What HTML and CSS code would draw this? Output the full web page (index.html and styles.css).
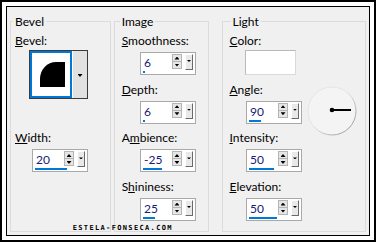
FILE: index.html
```html
<!DOCTYPE html>
<html lang="en">

<head>
    <meta charset="UTF-8">
    <meta name="viewport" content="width=device-width, initial-scale=1.0">
    <title>Bevel</title>
    <link rel="stylesheet" href="styles.css">
</head>

<body>
    <div class="screen">
        <div class="dialog">
            <fieldset class="group group-bevel">
                <legend>Bevel</legend>
                <div class="field field-pick">
                    <div class="label"><u>B</u>evel:</div>
                    <div class="pick">
                        <div class="pick-face">
                            <svg width="25" height="25" viewBox="0 0 25 25">
                                <path d="M0 25V17A16 17 0 0 1 16 0H25V25Z" fill="#000" />
                            </svg>
                        </div>
                        <div class="pick-drop"><span class="tri-down"></span></div>
                    </div>
                </div>
                <div class="field field-width">
                    <div class="label"><u>W</u>idth:</div>
                    <div class="spin">
                        <div class="spin-row">
                            <span class="spin-val">20</span>
                            <span class="arrows"><span><i class="tri-up"></i></span><span><i class="tri-down"></i></span></span>
                            <span class="drop"><i class="tri-down"></i></span>
                        </div>
                        <div class="spin-bar" style="width: 32px"></div>
                    </div>
                </div>
            </fieldset>

            <fieldset class="group group-image">
                <legend>Image</legend>
                <div class="field">
                    <div class="label"><u>S</u>moothness:</div>
                    <div class="spin">
                        <div class="spin-row">
                            <span class="spin-val">6</span>
                            <span class="arrows"><span><i class="tri-up"></i></span><span><i class="tri-down"></i></span></span>
                            <span class="drop"><i class="tri-down"></i></span>
                        </div>
                        <div class="spin-bar" style="width: 2px"></div>
                    </div>
                </div>
                <div class="field">
                    <div class="label"><u>D</u>epth:</div>
                    <div class="spin">
                        <div class="spin-row">
                            <span class="spin-val">6</span>
                            <span class="arrows"><span><i class="tri-up"></i></span><span><i class="tri-down"></i></span></span>
                            <span class="drop"><i class="tri-down"></i></span>
                        </div>
                        <div class="spin-bar" style="width: 2px"></div>
                    </div>
                </div>
                <div class="field">
                    <div class="label">A<u>m</u>bience:</div>
                    <div class="spin">
                        <div class="spin-row">
                            <span class="spin-val">-25</span>
                            <span class="arrows"><span><i class="tri-up"></i></span><span><i class="tri-down"></i></span></span>
                            <span class="drop"><i class="tri-down"></i></span>
                        </div>
                        <div class="spin-bar" style="width: 19px"></div>
                    </div>
                </div>
                <div class="field">
                    <div class="label">S<u>h</u>ininess:</div>
                    <div class="spin">
                        <div class="spin-row">
                            <span class="spin-val">25</span>
                            <span class="arrows"><span><i class="tri-up"></i></span><span><i class="tri-down"></i></span></span>
                            <span class="drop"><i class="tri-down"></i></span>
                        </div>
                        <div class="spin-bar" style="width: 12px"></div>
                    </div>
                </div>
            </fieldset>

            <fieldset class="group group-light">
                <legend>Light</legend>
                <div class="light-body">
                    <div class="field">
                        <div class="label label-color"><u>C</u>olor:</div>
                        <div class="swatch"></div>
                    </div>
                    <div class="field">
                        <div class="label"><u>A</u>ngle:</div>
                        <div class="spin">
                            <div class="spin-row">
                                <span class="spin-val">90</span>
                                <span class="arrows"><span><i class="tri-up"></i></span><span><i class="tri-down"></i></span></span>
                                <span class="drop"><i class="tri-down"></i></span>
                            </div>
                            <div class="spin-bar" style="width: 12px"></div>
                        </div>
                    </div>
                    <div class="dial">
                        <svg width="50" height="50" viewBox="0 0 50 50">
                            <defs>
                                <linearGradient id="ring" x1="0" y1="0" x2="1" y2="1">
                                    <stop offset="0.45" stop-color="#e4e4e4" />
                                    <stop offset="1" stop-color="#8a8a8a" />
                                </linearGradient>
                            </defs>
                            <circle cx="25" cy="25" r="24" fill="#f4f4f4" stroke="url(#ring)" stroke-width="1" />
                            <line x1="25" y1="24" x2="44" y2="24" stroke="#000" stroke-width="2" />
                            <circle cx="25" cy="24" r="2.3" fill="#000" />
                        </svg>
                    </div>
                    <div class="field">
                        <div class="label"><u>I</u>ntensity:</div>
                        <div class="spin">
                            <div class="spin-row">
                                <span class="spin-val">50</span>
                                <span class="arrows"><span><i class="tri-up"></i></span><span><i class="tri-down"></i></span></span>
                                <span class="drop"><i class="tri-down"></i></span>
                            </div>
                            <div class="spin-bar" style="width: 25px"></div>
                        </div>
                    </div>
                    <div class="field">
                        <div class="label"><u>E</u>levation:</div>
                        <div class="spin">
                            <div class="spin-row">
                                <span class="spin-val">50</span>
                                <span class="arrows"><span><i class="tri-up"></i></span><span><i class="tri-down"></i></span></span>
                                <span class="drop"><i class="tri-down"></i></span>
                            </div>
                            <div class="spin-bar" style="width: 28px"></div>
                        </div>
                    </div>
                </div>
            </fieldset>

            <div class="watermark">ESTELA-FONSECA.COM</div>
        </div>
    </div>
</body>

</html>
```

FILE: styles.css
```css
body {
    margin: 0;
    background: #fff;
    font-family: Lato, "Open Sans", sans-serif;
    font-size: 12px;
    color: #000;
}

.screen {
    width: 376px;
    height: 242px;
    box-sizing: border-box;
    border: 2px solid #000;
    padding: 4px;
    background: #fff;
}

.dialog {
    position: relative;
    display: flex;
    gap: 3px;
    height: 100%;
    box-sizing: border-box;
    border: 1px solid #000;
    padding: 6px 3px 3px;
    background: #f0f0f0;
}

.group {
    --indent: 17px;
    margin: 0;
    padding: 4px 0 0 4px;
    min-width: 0;
    box-sizing: border-box;
    border: 1px solid #dcdcdc;
}

.group legend {
    margin-left: -2px;
    padding: 2px 2px 0;
    line-height: 14px;
}

.group-bevel {
    width: 101px;
}

.group-image {
    --indent: 18.3px;
    width: 95px;
    padding-left: 6.7px;
}

.group-light {
    --indent: 16.5px;
    width: 144px;
    margin-left: auto;
    padding-left: 6.5px;
}

.group-light legend {
    margin-left: 1px;
}

.field + .field {
    margin-top: 6.7px;
}

.label {
    line-height: 16px;
    margin-bottom: 3px;
    white-space: nowrap;
}

.label u {
    text-underline-offset: 1px;
}

/* bevel shape picker */
.field-pick .label {
    margin-bottom: 1px;
}

.group-bevel .field-width {
    margin-top: 31.4px;
}

.pick {
    display: flex;
    width: 59px;
    height: 49px;
    margin-left: 14px;
    box-sizing: border-box;
    border: 1px solid #3a3a3a;
}

.pick-face {
    display: flex;
    align-items: center;
    justify-content: center;
    width: 42px;
    padding-left: 2px;
    box-sizing: border-box;
    border: 2px solid #0078d7;
    background: #fff;
}

.pick-drop {
    display: flex;
    flex: 1;
    align-items: center;
    justify-content: center;
    padding-top: 2px;
    border-left: 1px solid #fff;
    background: #e1e1e1;
}

/* spin box */
.spin {
    width: 56px;
    height: 23px;
    margin-left: var(--indent);
    box-sizing: border-box;
    border: 1px solid #a9a9a9;
    padding: 1px 2px 0;
    background: #fff;
}

.spin-row {
    display: flex;
    height: 17px;
}

.spin-val {
    flex: 1;
    padding-left: 1px;
    line-height: 18px;
    color: #15207a;
}

.arrows {
    display: flex;
    flex-direction: column;
    width: 10px;
    height: 15px;
    margin-right: 3px;
}

.arrows span {
    display: flex;
    flex: 1;
    align-items: center;
    justify-content: center;
    border: 1px solid #b4b4b4;
    background: #e6e6e6;
}

.arrows span + span {
    border-top: 0;
}

.drop {
    display: flex;
    justify-content: center;
    width: 8px;
    height: 16px;
    box-sizing: border-box;
    padding-top: 5px;
    border: 1px solid;
    border-color: #fff #6a6a6a #6a6a6a #fff;
    background: #e9e9e9;
}

.spin-bar {
    height: 2px;
    background: #0078d7;
}

.tri-up,
.tri-down {
    display: block;
    width: 5px;
    height: 3px;
    background: #000;
}

.tri-up {
    clip-path: polygon(50% 0, 100% 100%, 0 100%);
}

.tri-down {
    clip-path: polygon(0 0, 100% 0, 50% 100%);
}

.drop .tri-down {
    width: 4px;
    height: 2px;
}

/* light */
.light-body {
    display: grid;
    grid-template-columns: auto auto;
    justify-content: start;
    column-gap: 5px;
}

.light-body .field {
    grid-column: 1;
    margin-top: 0;
}

.light-body .field + .field,
.light-body .dial + .field {
    margin-top: 6.7px;
}

.label-color {
    margin-bottom: 1px;
}

.swatch {
    width: 51px;
    height: 25px;
    margin-left: 15.5px;
    box-sizing: border-box;
    border: 1px solid;
    border-color: #b9b9b9 #d9d9d9 #d9d9d9 #b9b9b9;
    background: #fff;
}

.dial {
    grid-column: 2;
    grid-row: 2 / 4;
    align-self: start;
    width: 50px;
    height: 50px;
    margin-top: 11px;
}

.watermark {
    position: absolute;
    left: 65.7px;
    top: 218px;
    font-family: "DejaVu Sans Mono", monospace;
    font-size: 7px;
    font-weight: bold;
    line-height: 7px;
    letter-spacing: 1.35px;
}
```
